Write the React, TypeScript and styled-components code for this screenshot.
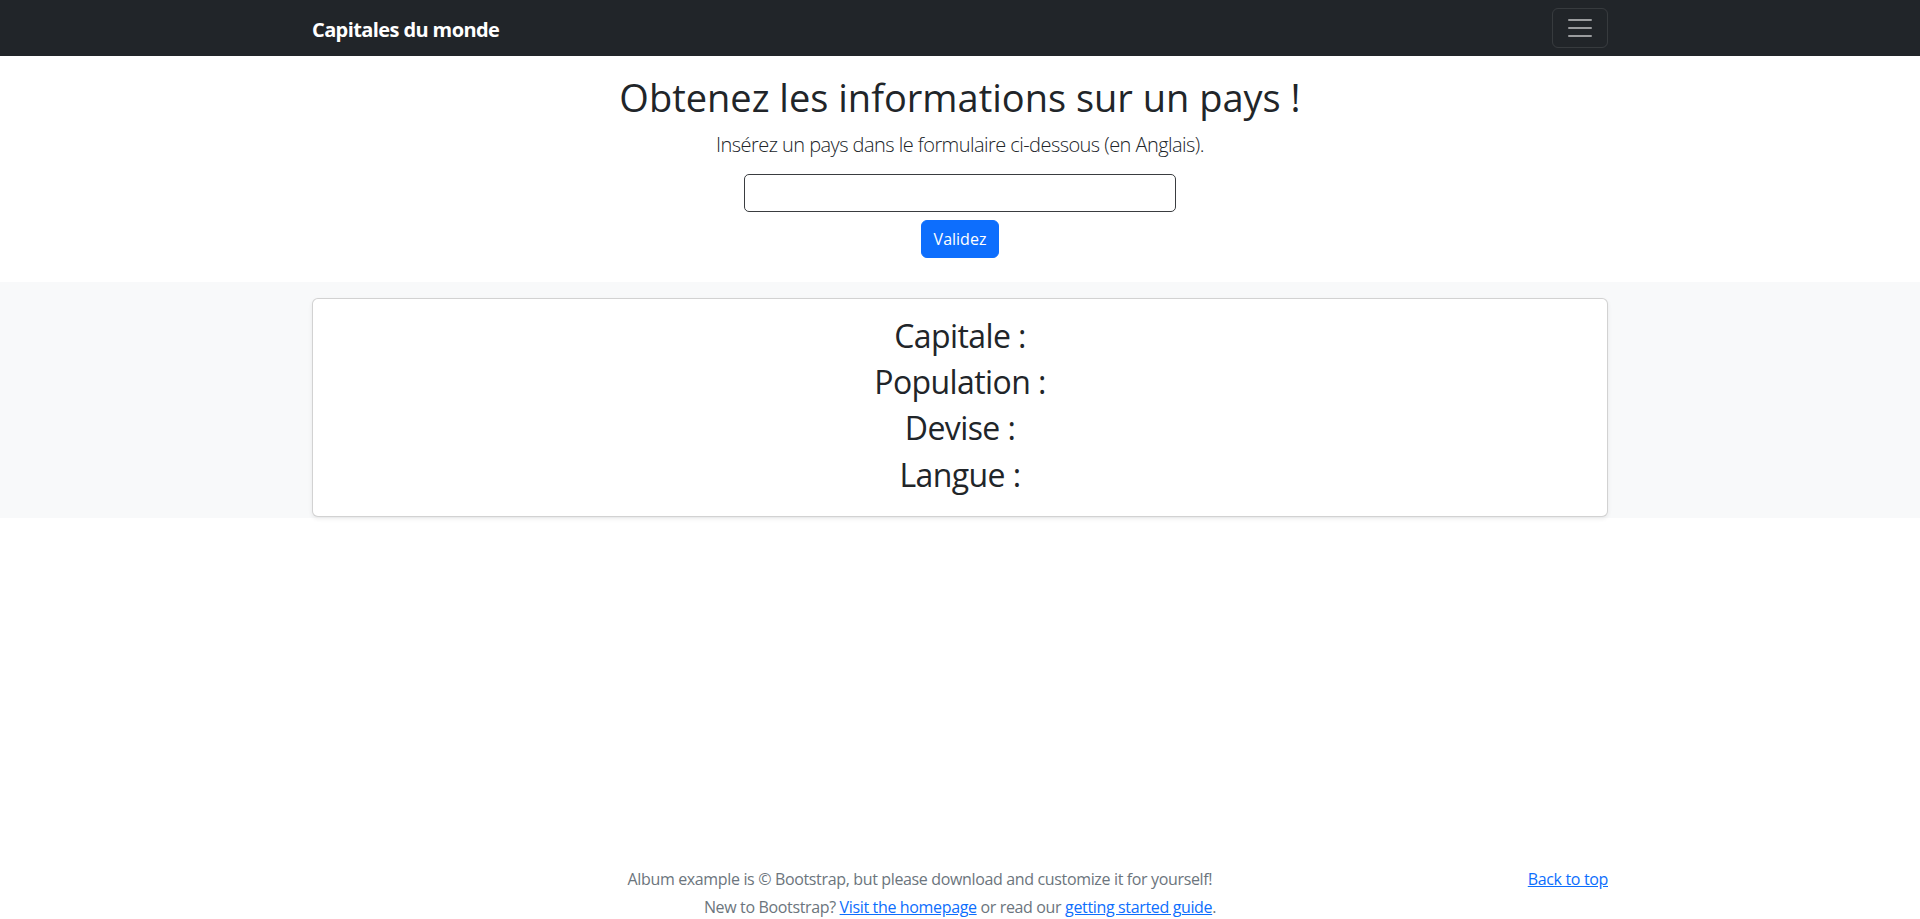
import React from "react";
import styled, { createGlobalStyle } from "styled-components";

const GlobalStyle = createGlobalStyle`
  *, *::before, *::after {
    box-sizing: border-box;
  }

  body {
    margin: 0;
    font-family: "Open Sans", "Noto Sans", "Liberation Sans", sans-serif;
    font-size: 16px;
    line-height: 1.5;
    color: #212529;
    background: #fff;
  }
`;

const Page = styled.div`
  min-height: 100vh;
  display: flex;
  flex-direction: column;
`;

const Container = styled.div`
  width: 100%;
  max-width: 1320px;
  margin: 0 auto;
  padding: 0 12px;
`;

const Navbar = styled.header`
  flex-shrink: 0;
  background: #212529;
  height: 56px;
  display: flex;
  align-items: center;
`;

const NavInner = styled(Container)`
  display: flex;
  align-items: center;
  justify-content: space-between;
`;

const Brand = styled.a`
  color: #fff;
  font-size: 20px;
  font-weight: 700;
  letter-spacing: -0.6px;
  text-decoration: none;
  line-height: 30px;
  padding-top: 4px;
`;

const Toggler = styled.button`
  width: 56px;
  height: 40px;
  padding: 4px 12px;
  display: flex;
  align-items: center;
  justify-content: center;
  background: transparent;
  border: 1px solid rgba(255, 255, 255, 0.1);
  border-radius: 6px;
  cursor: pointer;
`;

const Hero = styled.section`
  flex-shrink: 0;
  text-align: center;
  padding: 19px 0 24px;
`;

const Title = styled.h1`
  margin: 0 0 9px;
  font-size: 38px;
  font-weight: 400;
  line-height: 1.2;
`;

const Lead = styled.p`
  margin: 0 0 14px;
  font-size: 20px;
  font-weight: 300;
  line-height: 1.5;
  letter-spacing: -0.55px;
`;

const SearchForm = styled.form`
  display: flex;
  flex-direction: column;
  align-items: center;
  gap: 8px;
`;

const CountryInput = styled.input`
  width: 432px;
  height: 38px;
  padding: 6px 12px;
  font: inherit;
  border: 1px solid #3a3d40;
  border-radius: 5px;
  outline: none;
`;

const SubmitButton = styled.button`
  height: 38px;
  padding: 6px 12px;
  font: inherit;
  font-size: 16px;
  color: #fff;
  background: #0d6efd;
  border: 1px solid #0d6efd;
  border-radius: 6px;
  cursor: pointer;
`;

const ResultBand = styled.section`
  flex-shrink: 0;
  background: #f8f9fa;
  padding: 16px 0 1px;
`;

const Card = styled.div`
  background: #fff;
  border: 1px solid rgba(0, 0, 0, 0.175);
  border-radius: 6px;
  box-shadow: 0 2px 4px rgba(0, 0, 0, 0.075);
  padding: 18px 16px 14px;
  text-align: center;
`;

const InfoLine = styled.h2`
  margin: 0 0 8px;
  font-size: 32px;
  font-weight: 400;
  line-height: 1.2;
  letter-spacing: -0.6px;
`;

const Footer = styled.footer`
  flex-shrink: 0;
  margin-top: auto;
  color: #6c757d;
  text-align: center;
  letter-spacing: -0.35px;
`;

const BackToTop = styled.p`
  float: right;
  margin: 0 0 4px;
`;

const FooterLine = styled.p<{ $last?: boolean }>`
  margin: 0 0 ${(p) => (p.$last ? "0" : "4px")};
`;

const Link = styled.a`
  color: #0d6efd;
  text-decoration: underline;
`;

const fields = ["Capitale", "Population", "Devise", "Langue"];

function TogglerIcon() {
  return (
    <svg width="30" height="30" viewBox="0 0 30 30">
      <path
        d="M4 7h22M4 15h22M4 23h22"
        stroke="rgba(255,255,255,0.55)"
        strokeLinecap="round"
        strokeMiterlimit="10"
        strokeWidth="2"
      />
    </svg>
  );
}

export default function App() {
  return (
    <Page>
      <GlobalStyle />
      <Navbar>
        <NavInner>
          <Brand href="#">Capitales du monde</Brand>
          <Toggler type="button" aria-label="Toggle navigation">
            <TogglerIcon />
          </Toggler>
        </NavInner>
      </Navbar>

      <Hero>
        <Container>
          <Title>Obtenez les informations sur un pays !</Title>
          <Lead>Insérez un pays dans le formulaire ci-dessous (en Anglais).</Lead>
          <SearchForm onSubmit={(e) => e.preventDefault()}>
            <CountryInput type="text" />
            <SubmitButton type="submit">Validez</SubmitButton>
          </SearchForm>
        </Container>
      </Hero>

      <ResultBand>
        <Container>
          <Card>
            {fields.map((field) => (
              <InfoLine key={field}>{field} :</InfoLine>
            ))}
          </Card>
        </Container>
      </ResultBand>

      <Footer>
        <Container>
          <BackToTop>
            <Link href="#">Back to top</Link>
          </BackToTop>
          <FooterLine>
            Album example is © Bootstrap, but please download and customize it
            for yourself!
          </FooterLine>
          <FooterLine $last>
            New to Bootstrap? <Link href="#">Visit the homepage</Link> or read
            our <Link href="#">getting started guide</Link>.
          </FooterLine>
        </Container>
      </Footer>
    </Page>
  );
}
